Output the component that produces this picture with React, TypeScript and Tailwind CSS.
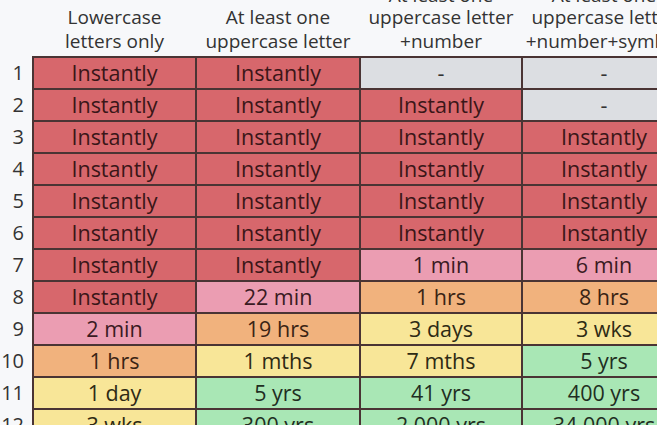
import React from "react";

type Cell = { text: string; tone: "red" | "pink" | "orange" | "yellow" | "green" | "grey" };

const toneClass: Record<Cell["tone"], string> = {
  red: "bg-[#d7676c] text-[#3a1618]",
  pink: "bg-[#eb9db2] text-[#3a1a22]",
  orange: "bg-[#f1b27d] text-[#3a2414]",
  yellow: "bg-[#f8e698] text-[#2e2a14]",
  green: "bg-[#a9e7b5] text-[#1f2e22]",
  grey: "bg-[#dcdee2] text-[#333333]",
};

const headers = [
  ["Lowercase", "letters only"],
  ["At least one", "uppercase letter"],
  ["At least one", "uppercase letter", "+number"],
  ["At least one", "uppercase letter", "+number+symbol"],
];

const c = (text: string, tone: Cell["tone"]): Cell => ({ text, tone });
const I = c("Instantly", "red");

const rows: Cell[][] = [
  [I, I, c("-", "grey"), c("-", "grey")],
  [I, I, I, c("-", "grey")],
  [I, I, I, I],
  [I, I, I, I],
  [I, I, I, I],
  [I, I, I, I],
  [I, I, c("1 min", "pink"), c("6 min", "pink")],
  [I, c("22 min", "pink"), c("1 hrs", "orange"), c("8 hrs", "orange")],
  [c("2 min", "pink"), c("19 hrs", "orange"), c("3 days", "yellow"), c("3 wks", "yellow")],
  [c("1 hrs", "orange"), c("1 mths", "yellow"), c("7 mths", "yellow"), c("5 yrs", "green")],
  [c("1 day", "yellow"), c("5 yrs", "green"), c("41 yrs", "green"), c("400 yrs", "green")],
  [c("3 wks", "yellow"), c("300 yrs", "green"), c("2,000 yrs", "green"), c("34,000 yrs", "green")],
];

const widths = ["w-[163px]", "w-[164px]", "w-[162px]", "w-[164px]"];

export default function App() {
  return (
    <div
      className="w-[657px] h-[425px] overflow-hidden bg-[#f7f8fa] text-[#333333]"
      style={{ fontFamily: '"Open Sans", "Noto Sans", sans-serif' }}
    >
      <div className="flex h-[56px] items-end">
        <div className="w-[33px] shrink-0" />
        {headers.map((lines, i) => (
          <div
            key={i}
            className={`${widths[i]} shrink-0 flex flex-col items-center pb-[3px] text-[19px] leading-[24px] whitespace-nowrap`}
          >
            {lines.map((l, j) => (
              <span key={j} className={lines.length === 3 && j === 0 ? "leading-[20px]" : ""}>
                {l}
              </span>
            ))}
          </div>
        ))}
      </div>
      <table className="border-collapse table-fixed w-[686px] shrink-0">
        <colgroup>
          <col className="w-[33px]" />
          <col className="w-[163px]" />
          <col className="w-[164px]" />
          <col className="w-[162px]" />
          <col className="w-[164px]" />
        </colgroup>
        <tbody>
          {rows.map((row, r) => (
            <tr key={r} className="h-[32px]">
              <td className="pr-[8px] text-right text-[20px] leading-none text-[#333333]">
                {r + 1}
              </td>
              {row.map((cell, i) => (
                <td
                  key={i}
                  className={`border-2 border-[#4a3434] text-center text-[21.5px] leading-none whitespace-nowrap ${toneClass[cell.tone]}`}
                >
                  {cell.text}
                </td>
              ))}
            </tr>
          ))}
        </tbody>
      </table>
    </div>
  );
}
